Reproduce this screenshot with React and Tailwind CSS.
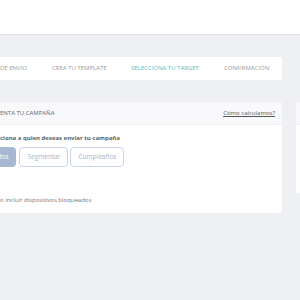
export default function App() {
  return (
    <div className="w-[300px] h-[300px] overflow-hidden bg-[#eff0f4] font-['Open_Sans',sans-serif]">
      <div className="h-[35px] bg-white border-b border-[#e2e3e8]" />
      <div className="mt-[22px] w-[282px] h-[23px] bg-white flex items-center text-[6px] text-[#9b9b9b] whitespace-nowrap">
        <span className="w-[52px]">DE ENVIO</span>
        <span className="w-[79px]">CREA TU TEMPLATE</span>
        <span className="w-[93px] text-[#4fc1c4]">SELECCIONA TU TARGET</span>
        <span>CONFIRMACIÓN</span>
      </div>
      <div className="mt-[22px] flex items-start gap-[14px]">
        <div className="w-[282px] shrink-0 h-[111px] bg-white rounded-r-[3px] overflow-hidden">
          <div className="h-[23px] bg-[#f9f9fb] border-b border-[#eeeff2] flex items-center justify-between pr-[7px] text-[6px] whitespace-nowrap">
            <span className="text-[#666]">ENTA TU CAMPAÑA</span>
            <span className="text-[#555] underline">Cómo calculamos?</span>
          </div>
          <div className="pt-[8px] text-[6px] whitespace-nowrap">
            <div className="font-bold text-[#5f5f5f] h-[10px] leading-[10px]">ciona a quien deseas enviar tu campaña</div>
            <div className="mt-[4px] flex gap-[2px] text-[6.5px]">
              <div className="-ml-[18px] mr-[1px] h-[20px] px-[8px] rounded-[4px] bg-[#a7b9d2] text-white flex items-center">Todos</div>
              <div className="h-[20px] w-[49px] rounded-[4px] border border-[#c9d5e6] text-[#a3b3ca] flex items-center justify-center">Segmentar</div>
              <div className="h-[20px] w-[54px] rounded-[4px] border border-[#c9d5e6] text-[#a3b3ca] flex items-center justify-center">Cumpleaños</div>
            </div>
            <div className="mt-[28px] text-[#777] h-[10px] leading-[10px]">o incluir dispositivos bloqueados</div>
          </div>
        </div>
        <div className="w-[100px] shrink-0 h-[91px] bg-white rounded-[3px] overflow-hidden">
          <div className="h-[23px] bg-[#f9f9fb] border-b border-[#eeeff2]" />
        </div>
      </div>
    </div>
  );
}
